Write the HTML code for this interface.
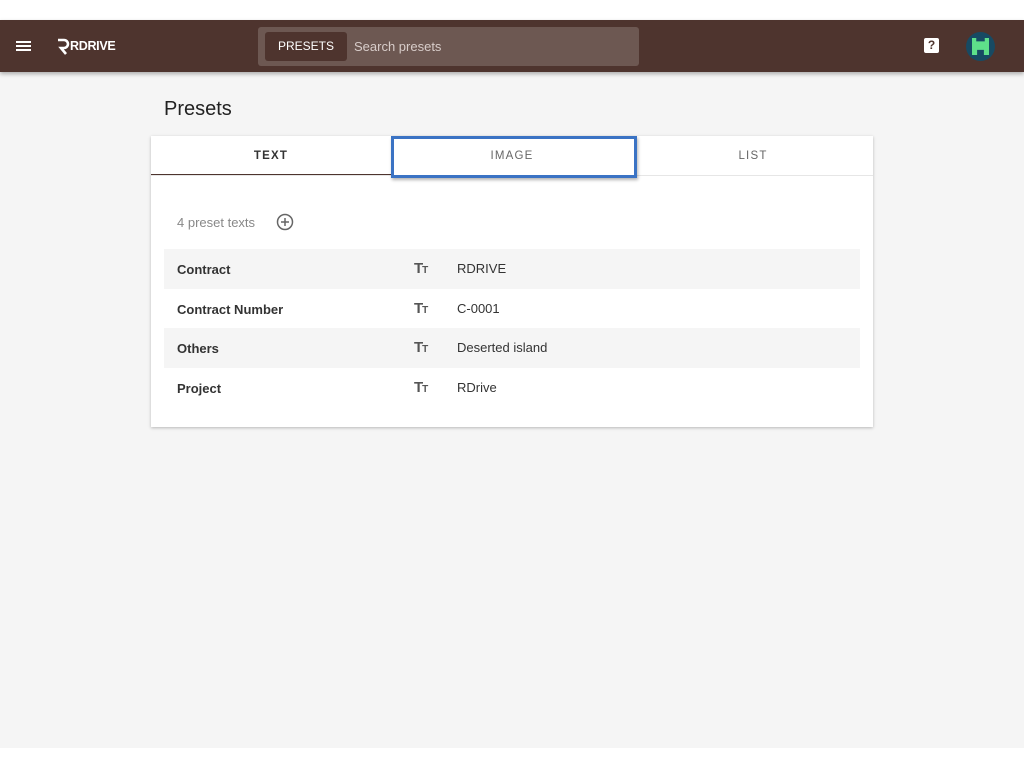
<!DOCTYPE html>
<html><head><style>
*{box-sizing:border-box;margin:0;padding:0}
body{width:1024px;height:768px;background:#fff;font-family:"Liberation Sans",sans-serif;position:relative;overflow:hidden}
.bg{position:absolute;top:20px;left:0;width:1024px;height:728px;background:#f5f5f5}
.hdr{position:absolute;top:20px;left:0;width:1024px;height:52px;background:#4e342e;box-shadow:0 2px 4px rgba(0,0,0,.3)}
.search{position:absolute;left:258px;top:7px;width:381px;height:39px;background:#6d5852;border-radius:3px}
.pbtn{position:absolute;left:7px;top:5px;width:82px;height:29px;background:#4e342e;border-radius:3px;color:#fff;font-size:12px;line-height:29px;text-align:center}
.ph{position:absolute;left:96px;top:0;line-height:39px;color:#d8cdca;font-size:13px}
h1{position:absolute;left:164px;top:98px;font-size:20px;font-weight:normal;color:#222}
.card{position:absolute;left:151px;top:136px;width:722px;height:291px;background:#fff;box-shadow:0 1px 3px rgba(0,0,0,.25)}
.tab{position:absolute;top:0;height:40px;line-height:40px;text-align:center;font-size:11.5px;letter-spacing:1.2px;color:#666}
.row{position:absolute;left:13px;width:696px;height:39.5px;font-size:13px;color:#222}
.row.g{background:#f5f5f5}
.row .n{position:absolute;left:13px;top:13px;font-weight:bold;color:#333}
.row .i{position:absolute;left:250px;top:11px;font-weight:bold;color:#555;font-size:15px;letter-spacing:-1px}
.row .i small{font-size:10px}
.row .v{position:absolute;left:293px;top:12px;color:#333}
</style></head><body>
<div class="bg"></div>
<div class="hdr">
 <div style="position:absolute;left:16px;top:21px;width:15px;height:2px;background:#fff;box-shadow:0 4px 0 #fff,0 8px 0 #fff"></div>
 <svg style="position:absolute;left:56px;top:18px" width="14" height="17" viewBox="0 0 14 17"><path d="M2 2h6a4 4 0 0 1 0 8H5l5 6" fill="none" stroke="#fff" stroke-width="2.6"/></svg>
 <div style="position:absolute;left:70px;top:19px;color:#fff;font-size:12.5px;font-weight:bold;letter-spacing:-.3px">RDRIVE</div>
 <div class="search"><div class="pbtn">PRESETS</div><div class="ph">Search presets</div></div>
 <div style="position:absolute;left:924px;top:18px;width:15px;height:15px;background:#fff;border-radius:2px;color:#4e342e;font-size:12px;font-weight:bold;text-align:center;line-height:15px">?</div>
 <div style="position:absolute;left:966px;top:12px;width:29px;height:29px;border-radius:50%;background:#174a63;overflow:hidden">
  <div style="position:absolute;left:6px;top:6px;width:17px;height:17px;background:#5ee08a;clip-path:polygon(0 0,25% 0,25% 20%,75% 20%,75% 0,100% 0,100% 100%,70% 100%,70% 70%,30% 70%,30% 100%,0 100%)"></div>
 </div>
</div>
<h1>Presets</h1>
<div class="card">
 <div class="tab" style="left:0;width:240px;color:#333;font-weight:bold">TEXT</div>
 <div style="position:absolute;left:0;top:38px;width:240px;height:2px;background:#4e342e"></div>
 <div style="position:absolute;left:0;top:39px;width:722px;height:1px;background:#e6e6e6"></div>
 <div class="tab" style="left:240px;width:242px">IMAGE</div>
 <div class="tab" style="left:482px;width:240px">LIST</div>
 <div style="position:absolute;left:240px;top:0;width:246px;height:42px;border:3px solid #3b73c4;box-shadow:1px 2px 3px rgba(0,0,0,.3)"></div>
 <div style="position:absolute;left:26px;top:79px;font-size:13px;color:#888">4 preset texts</div>
 <svg style="position:absolute;left:125px;top:77px" width="18" height="18" viewBox="0 0 18 18"><circle cx="9" cy="9" r="7.5" fill="none" stroke="#666" stroke-width="1.5"/><path d="M9 5v8M5 9h8" stroke="#666" stroke-width="1.5"/></svg>
 <div class="row g" style="top:113px"><span class="n">Contract</span><span class="i">T<small>T</small></span><span class="v">RDRIVE</span></div>
 <div class="row" style="top:152.5px"><span class="n">Contract Number</span><span class="i">T<small>T</small></span><span class="v">C-0001</span></div>
 <div class="row g" style="top:192px"><span class="n">Others</span><span class="i">T<small>T</small></span><span class="v">Deserted island</span></div>
 <div class="row" style="top:231.5px"><span class="n">Project</span><span class="i">T<small>T</small></span><span class="v">RDrive</span></div>
</div>
</body></html>
